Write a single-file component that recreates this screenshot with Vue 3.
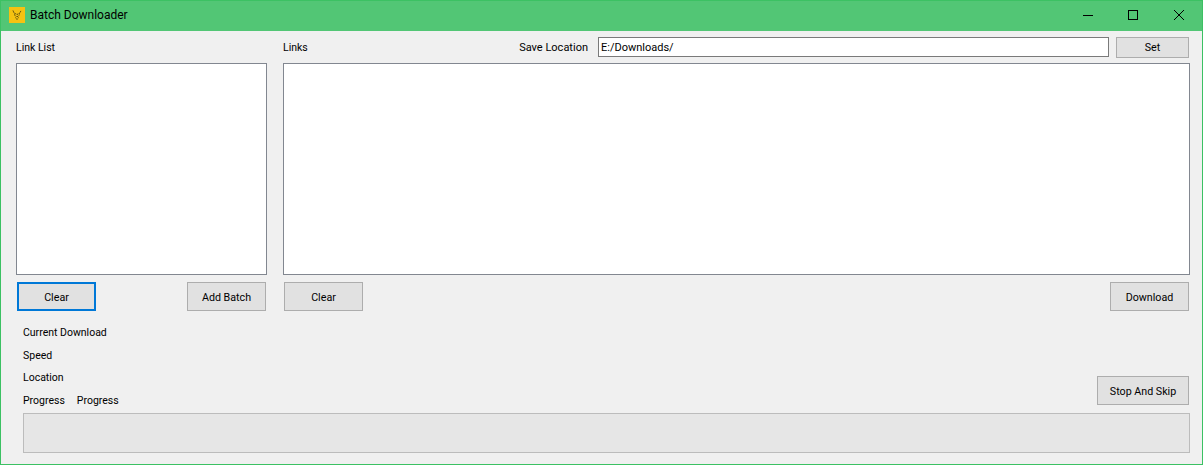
<script setup>
const statusRows = ['Current Download', 'Speed', 'Location']
</script>

<template>
  <div class="window">
    <header class="titlebar">
      <svg class="app-icon" width="16" height="16" viewBox="0 0 16 16">
        <rect width="16" height="16" fill="#f5c211" />
        <path d="M4 3.5 5 6 8 7.5 11 6 12 3.5M5 7.5 8 10 11 7.5M6.5 10.5 8 12.5 9.5 10.5" fill="none" stroke="#4d4410" stroke-width="1" stroke-dasharray="1.4 0.6" />
      </svg>
      <span class="title">Batch Downloader</span>
      <div class="controls">
        <svg width="46" height="30" viewBox="0 0 46 30"><path d="M18 14.5H28" stroke="#000" fill="none" /></svg>
        <svg width="46" height="30" viewBox="0 0 46 30"><rect x="17.5" y="9.5" width="9" height="9" stroke="#000" fill="none" /></svg>
        <svg width="46" height="30" viewBox="0 0 46 30"><path d="M17 9 27 19M27 9 17 19" stroke="#000" fill="none" /></svg>
      </div>
    </header>

    <main class="content">
      <div class="columns">
        <section class="left">
          <label class="head">Link List</label>
          <div class="listbox"></div>
          <div class="btn-row">
            <button class="btn focused">Clear</button>
            <button class="btn">Add Batch</button>
          </div>
        </section>

        <section class="right">
          <div class="head">
            <label>Links</label>
            <div class="save">
              <label>Save Location</label>
              <input class="path" type="text" value="E:/Downloads/" />
              <button class="btn set">Set</button>
            </div>
          </div>
          <div class="listbox"></div>
          <div class="btn-row">
            <button class="btn">Clear</button>
            <button class="btn">Download</button>
          </div>
        </section>
      </div>

      <div class="status">
        <div class="status-text">
          <div v-for="row in statusRows" :key="row" class="status-line">{{ row }}</div>
          <div class="status-line progress-labels">
            <span>Progress</span>
            <span>Progress</span>
          </div>
        </div>
        <button class="btn stop">Stop And Skip</button>
      </div>
      <div class="progress"></div>
    </main>
  </div>
</template>

<style>
html,
body {
  margin: 0;
  background: #f0f0f0;
}
</style>

<style scoped>
.window {
  box-sizing: border-box;
  width: 1203px;
  height: 465px;
  border: 1px solid #3cc163;
  background: #f0f0f0;
  color: #000;
  font-family: Roboto, "Liberation Sans", sans-serif;
  font-size: 10.5px;
  display: flex;
  flex-direction: column;
  overflow: hidden;
}

.titlebar {
  box-sizing: border-box;
  flex: none;
  height: 30px;
  padding: 0 0 2px 8px;
  background: #52c675;
  display: flex;
  align-items: center;
}

.app-icon {
  margin-right: 5px;
}

.title {
  font-size: 12px;
}

.controls {
  margin-left: auto;
  margin-right: -1px;
  align-self: flex-start;
  display: flex;
}

.content {
  flex: 1;
  padding: 0 12px 0 15px;
}

.columns {
  display: grid;
  grid-template-columns: 251px 907px;
  column-gap: 16px;
}

.head {
  height: 32px;
  display: flex;
  align-items: center;
  justify-content: space-between;
}

.save {
  display: flex;
  align-items: center;
}

.save label {
  margin-right: 10px;
  font-size: 11px;
}

.path {
  box-sizing: border-box;
  width: 511px;
  height: 20px;
  padding: 0 2px;
  border: 1px solid #7a7a7a;
  background: #fff;
  font: inherit;
  font-size: 11px;
  color: #000;
  outline: none;
}

.listbox {
  box-sizing: border-box;
  height: 212px;
  border: 1px solid #828790;
  background: #fff;
}

.btn-row {
  display: flex;
  justify-content: space-between;
  margin-top: 7px;
  padding: 0 1px;
}

.btn {
  box-sizing: border-box;
  width: 79px;
  height: 29px;
  padding: 1px 0 0;
  border: 1px solid #adadad;
  background: #e1e1e1;
  font: inherit;
  font-size: 10.7px;
  color: #000;
}

.focused {
  border: 2px solid #0078d7;
}

.set {
  width: 73px;
  height: 21px;
  margin-left: 7px;
  margin-right: 1px;
}

.status {
  display: flex;
  justify-content: space-between;
  align-items: flex-end;
  padding: 11px 1px 0 7px;
}

.status-line {
  height: 22.5px;
  line-height: 22.5px;
}

.progress-labels {
  display: flex;
  gap: 12px;
}

.stop {
  width: 92px;
  margin-bottom: 7px;
}

.progress {
  box-sizing: border-box;
  height: 40px;
  margin: 1px 0 0 7px;
  border: 1px solid #bcbcbc;
  background: #e6e6e6;
}
</style>
